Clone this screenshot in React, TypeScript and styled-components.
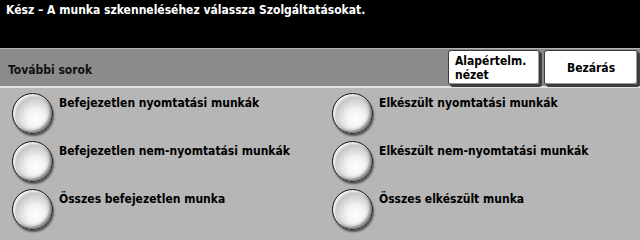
import React from 'react';
import styled, { createGlobalStyle } from 'styled-components';

const GlobalStyle = createGlobalStyle`
  html, body {
    margin: 0;
    padding: 0;
    background: #000;
  }
  body {
    font-family: "Liberation Sans Narrow", "DejaVu Sans Condensed", "Liberation Sans", Arial, sans-serif;
  }
`;

const leftItems = [
  'Befejezetlen nyomtatási munkák',
  'Befejezetlen nem-nyomtatási munkák',
  'Összes befejezetlen munka',
];

const rightItems = [
  'Elkészült nyomtatási munkák',
  'Elkészült nem-nyomtatási munkák',
  'Összes elkészült munka',
];

function App() {
  return (
    <Screen>
      <GlobalStyle />
      <Header>
        <Title>Kész – A munka szkenneléséhez válassza Szolgáltatásokat.</Title>
      </Header>
      <Toolbar>
        <BarLabel>További sorok</BarLabel>
        <ButtonGroup>
          <ToolButton $align="left">
            Alapértelm.
            <br />
            nézet
          </ToolButton>
          <ToolButton $align="center">Bezárás</ToolButton>
        </ButtonGroup>
      </Toolbar>
      <Content>
        <Column>
          {leftItems.map((label) => (
            <OptionRow key={label}>
              <RadioBall />
              <OptionLabel>{label}</OptionLabel>
            </OptionRow>
          ))}
        </Column>
        <Column>
          {rightItems.map((label) => (
            <OptionRow key={label}>
              <RadioBall />
              <OptionLabel>{label}</OptionLabel>
            </OptionRow>
          ))}
        </Column>
      </Content>
    </Screen>
  );
}

export default App;

const Screen = styled.div`
  width: 640px;
  height: 240px;
  overflow: hidden;
  display: flex;
  flex-direction: column;
  background: #b6b6b6;
`;

const Header = styled.div`
  height: 48px;
  flex: none;
  background: #000;
  padding: 2px 6px 0;
  box-sizing: border-box;
`;

const Title = styled.div`
  color: #fff;
  font-weight: bold;
  font-size: 12px;
  line-height: 16px;
`;

const Toolbar = styled.div`
  height: 40px;
  flex: none;
  box-sizing: border-box;
  display: flex;
  align-items: center;
  justify-content: space-between;
  background: #8b8b8b;
  border-top: 1px solid #b4b4b4;
  border-bottom: 2px solid #e4e4e4;
  padding: 0 2px 0 8px;
`;

const BarLabel = styled.div`
  font-weight: bold;
  font-size: 12px;
  color: #111;
  padding-top: 4px;
`;

const ButtonGroup = styled.div`
  display: flex;
  gap: 4px;
  align-self: flex-start;
  margin-top: 1px;
`;

const ToolButton = styled.div<{ $align: 'left' | 'center' }>`
  width: 92px;
  height: 35px;
  box-sizing: border-box;
  background: #fff;
  border: 1px solid #3a3a3a;
  border-radius: 3px;
  box-shadow: inset -1px -1px 0 #9a9a9a, 2px 2px 0 #3e3e3e;
  font-weight: bold;
  font-size: 12px;
  line-height: 14px;
  color: #000;
  display: flex;
  flex-direction: column;
  justify-content: center;
  text-align: ${({ $align }) => $align};
  padding: 0 6px;
  &:last-child {
    width: 94px;
  }
`;

const Content = styled.div`
  flex: 1;
  display: grid;
  grid-template-columns: 320px 320px;
  padding-top: 5px;
`;

const Column = styled.div`
  display: flex;
  flex-direction: column;
  gap: 7px;
  padding-left: 12px;
`;

const OptionRow = styled.div`
  display: flex;
  align-items: flex-start;
  gap: 6px;
  height: 41px;
`;

const RadioBall = styled.div`
  width: 41px;
  height: 41px;
  flex: none;
  box-sizing: border-box;
  border-radius: 50%;
  border: 1px solid #1e1e1e;
  background: radial-gradient(
    circle at 58% 62%,
    #ffffff 0%,
    #f2f2f2 28%,
    #cdcdcd 58%,
    #9a9a9a 86%,
    #686868 100%
  );
  box-shadow: inset 2px 2px 2px rgba(255, 255, 255, 0.85),
    inset -2px -2px 3px rgba(0, 0, 0, 0.45), 1px 2px 2px rgba(0, 0, 0, 0.55);
`;

const OptionLabel = styled.div`
  font-weight: bold;
  font-size: 12px;
  line-height: 16px;
  color: #000;
  padding-top: 2px;
`;
